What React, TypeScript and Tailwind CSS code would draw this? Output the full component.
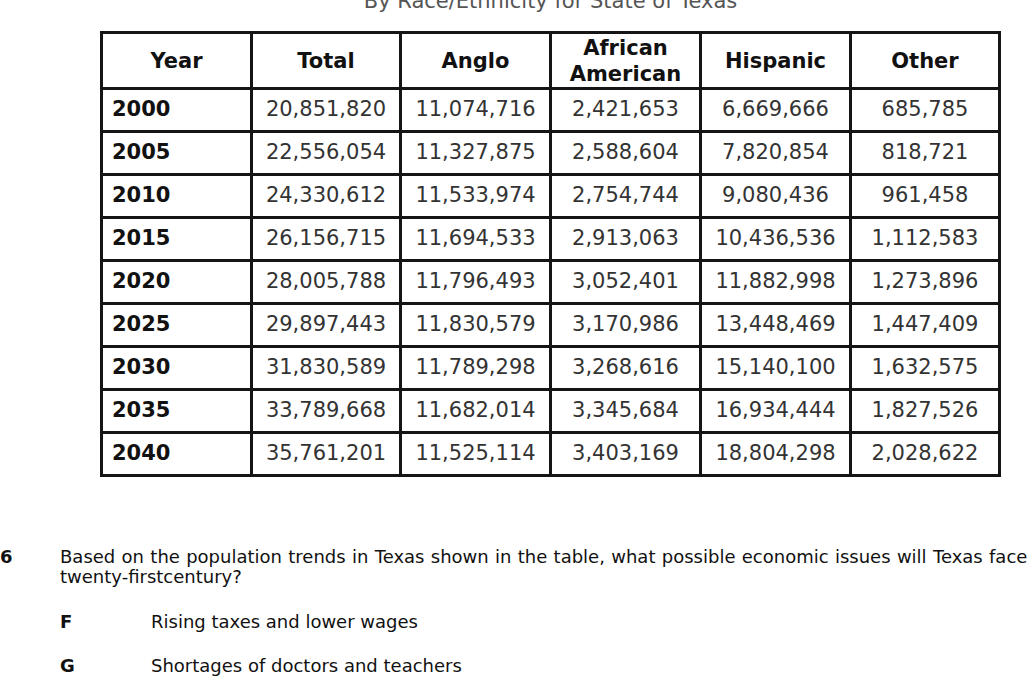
const rows: [string, string, string, string, string, string][] = [
  ['2000', '20,851,820', '11,074,716', '2,421,653', '6,669,666', '685,785'],
  ['2005', '22,556,054', '11,327,875', '2,588,604', '7,820,854', '818,721'],
  ['2010', '24,330,612', '11,533,974', '2,754,744', '9,080,436', '961,458'],
  ['2015', '26,156,715', '11,694,533', '2,913,063', '10,436,536', '1,112,583'],
  ['2020', '28,005,788', '11,796,493', '3,052,401', '11,882,998', '1,273,896'],
  ['2025', '29,897,443', '11,830,579', '3,170,986', '13,448,469', '1,447,409'],
  ['2030', '31,830,589', '11,789,298', '3,268,616', '15,140,100', '1,632,575'],
  ['2035', '33,789,668', '11,682,014', '3,345,684', '16,934,444', '1,827,526'],
  ['2040', '35,761,201', '11,525,114', '3,403,169', '18,804,298', '2,028,622'],
];

export default function App() {
  return (
    <div className="w-[1029px] h-[683px] overflow-hidden bg-white text-[#111] font-['DejaVu_Sans',Verdana,sans-serif]">
      {/* Table */}
      <div className="ml-[101px] w-[899px]">
        <div className="mt-[-11px] h-6 leading-6 text-center text-[21px] text-[#555] whitespace-nowrap">
          By Race/Ethnicity for State of Texas
        </div>
        <table className="mt-[18px] ml-[-1px] w-[898px] table-fixed border-collapse border-[3px] border-[#151515] text-[21px]">
          <colgroup>
            <col className="w-[150px]" />
            <col className="w-[149px]" />
            <col className="w-[150px]" />
            <col className="w-[150px]" />
            <col className="w-[150px]" />
            <col className="w-[149px]" />
          </colgroup>
          <thead>
            <tr className="h-[56px] font-bold text-center">
              <th className="border-[3px] border-[#151515] leading-[26px]">Year</th>
              <th className="border-[3px] border-[#151515] leading-[26px]">Total</th>
              <th className="border-[3px] border-[#151515] leading-[26px]">Anglo</th>
              <th className="border-[3px] border-[#151515] leading-[26px]">
                African
                <br />
                American
              </th>
              <th className="border-[3px] border-[#151515] leading-[26px]">Hispanic</th>
              <th className="border-[3px] border-[#151515] leading-[26px]">Other</th>
            </tr>
          </thead>
          <tbody>
            {rows.map((r) => (
              <tr key={r[0]} className="h-[43px]">
                <td className="border-[3px] border-[#151515] pl-[9px] font-bold">{r[0]}</td>
                {r.slice(1).map((v, i) => (
                  <td key={i} className="border-[3px] border-[#151515] text-center text-[#333] whitespace-nowrap">
                    {v}
                  </td>
                ))}
              </tr>
            ))}
          </tbody>
        </table>
      </div>

      {/* Question */}
      <div className="mt-[70px] text-[18px] leading-5">
        <div className="flex">
          <span className="w-[60px] shrink-0 font-bold">6</span>
          <div className="[word-spacing:0.6px]">
            <div className="whitespace-nowrap">
              Based on the population trends in Texas shown in the table, what possible economic issues will Texas face in the
            </div>
            <div>twenty-firstcentury?</div>
          </div>
        </div>
        <div className="mt-[25px] flex">
          <span className="ml-[60px] w-[91px] shrink-0 font-bold">F</span>
          <span>Rising taxes and lower wages</span>
        </div>
        <div className="mt-[24px] flex">
          <span className="ml-[60px] w-[91px] shrink-0 font-bold">G</span>
          <span>Shortages of doctors and teachers</span>
        </div>
      </div>
    </div>
  );
}
